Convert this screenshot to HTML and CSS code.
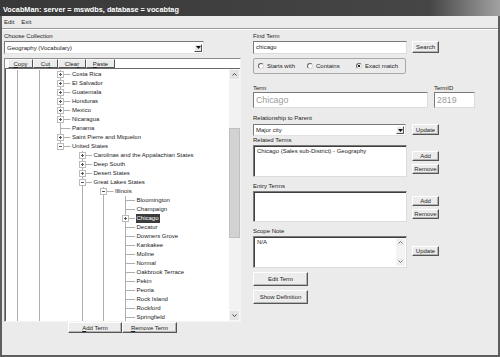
FILE: index.html
```html
<!DOCTYPE html>
<html lang="en">

<head>
    <meta charset="UTF-8">
    <meta name="viewport" content="width=device-width, initial-scale=1.0">
    <title>VocabMan</title>
    <link rel="stylesheet" href="styles.css">
</head>

<body>
    <div class="window">
        <div class="titlebar">VocabMan: server = mswdbs, database = vocabtag</div>
        <div class="frame">
            <div class="menubar"><span>Edit</span><span>Exit</span></div>

            <div class="client">
                <!-- left: collection + tree -->
                <div class="left">
                    <div class="label">Choose Collection</div>
                    <div class="select collection">
                        <span class="value">Geography (Vocabulary)</span>
                        <span class="drop"><svg width="5" height="3" viewBox="0 0 5 3"><path d="M0 0h5L2.5 3z" fill="#111"/></svg></span>
                    </div>

                    <div class="tree-frame">
                        <div class="toolbar">
                            <button class="btn tb w25"><u>C</u>opy</button>
                            <button class="btn tb w25">Cu<u>t</u></button>
                            <button class="btn tb w28">Clea<u>r</u></button>
                            <button class="btn tb w29"><u>P</u>aste</button>
                        </div>
                        <div class="tree-area">
                            <div class="tree">
                                <div class="row"><span class="c v"></span><span class="c v"></span><span class="c t"><span class="x p"></span></span><span class="txt">Costa Rica</span></div>
                                <div class="row"><span class="c v"></span><span class="c v"></span><span class="c t"><span class="x p"></span></span><span class="txt">El Salvador</span></div>
                                <div class="row"><span class="c v"></span><span class="c v"></span><span class="c t"><span class="x p"></span></span><span class="txt">Guatemala</span></div>
                                <div class="row"><span class="c v"></span><span class="c v"></span><span class="c t"><span class="x p"></span></span><span class="txt">Honduras</span></div>
                                <div class="row"><span class="c v"></span><span class="c v"></span><span class="c t"><span class="x p"></span></span><span class="txt">Mexico</span></div>
                                <div class="row"><span class="c v"></span><span class="c v"></span><span class="c t"><span class="x p"></span></span><span class="txt">Nicaragua</span></div>
                                <div class="row"><span class="c v"></span><span class="c v"></span><span class="c t"></span><span class="txt">Panama</span></div>
                                <div class="row"><span class="c v"></span><span class="c v"></span><span class="c t"><span class="x p"></span></span><span class="txt">Saint Pierre and Miquelon</span></div>
                                <div class="row"><span class="c v"></span><span class="c v"></span><span class="c l"><span class="x m"></span></span><span class="txt">United States</span></div>
                                <div class="row"><span class="c v"></span><span class="c v"></span><span class="c"></span><span class="c t"><span class="x p"></span></span><span class="txt">Carolinas and the Appalachian States</span></div>
                                <div class="row"><span class="c v"></span><span class="c v"></span><span class="c"></span><span class="c t"><span class="x p"></span></span><span class="txt">Deep South</span></div>
                                <div class="row"><span class="c v"></span><span class="c v"></span><span class="c"></span><span class="c t"><span class="x p"></span></span><span class="txt">Desert States</span></div>
                                <div class="row"><span class="c v"></span><span class="c v"></span><span class="c"></span><span class="c t"><span class="x m"></span></span><span class="txt">Great Lakes States</span></div>
                                <div class="row"><span class="c v"></span><span class="c v"></span><span class="c"></span><span class="c v"></span><span class="c t"><span class="x m"></span></span><span class="txt">Illinois</span></div>
                                <div class="row"><span class="c v"></span><span class="c v"></span><span class="c"></span><span class="c v"></span><span class="c v"></span><span class="c t"></span><span class="txt">Bloomington</span></div>
                                <div class="row"><span class="c v"></span><span class="c v"></span><span class="c"></span><span class="c v"></span><span class="c v"></span><span class="c t"></span><span class="txt">Champaign</span></div>
                                <div class="row"><span class="c v"></span><span class="c v"></span><span class="c"></span><span class="c v"></span><span class="c v"></span><span class="c t"><span class="x p"></span></span><span class="txt sel">Chicago</span></div>
                                <div class="row"><span class="c v"></span><span class="c v"></span><span class="c"></span><span class="c v"></span><span class="c v"></span><span class="c t"></span><span class="txt">Decatur</span></div>
                                <div class="row"><span class="c v"></span><span class="c v"></span><span class="c"></span><span class="c v"></span><span class="c v"></span><span class="c t"></span><span class="txt">Downers Grove</span></div>
                                <div class="row"><span class="c v"></span><span class="c v"></span><span class="c"></span><span class="c v"></span><span class="c v"></span><span class="c t"></span><span class="txt">Kankakee</span></div>
                                <div class="row"><span class="c v"></span><span class="c v"></span><span class="c"></span><span class="c v"></span><span class="c v"></span><span class="c t"></span><span class="txt">Moline</span></div>
                                <div class="row"><span class="c v"></span><span class="c v"></span><span class="c"></span><span class="c v"></span><span class="c v"></span><span class="c t"></span><span class="txt">Normal</span></div>
                                <div class="row"><span class="c v"></span><span class="c v"></span><span class="c"></span><span class="c v"></span><span class="c v"></span><span class="c t"></span><span class="txt">Oakbrook Terrace</span></div>
                                <div class="row"><span class="c v"></span><span class="c v"></span><span class="c"></span><span class="c v"></span><span class="c v"></span><span class="c t"></span><span class="txt">Pekin</span></div>
                                <div class="row"><span class="c v"></span><span class="c v"></span><span class="c"></span><span class="c v"></span><span class="c v"></span><span class="c t"></span><span class="txt">Peoria</span></div>
                                <div class="row"><span class="c v"></span><span class="c v"></span><span class="c"></span><span class="c v"></span><span class="c v"></span><span class="c t"></span><span class="txt">Rock Island</span></div>
                                <div class="row"><span class="c v"></span><span class="c v"></span><span class="c"></span><span class="c v"></span><span class="c v"></span><span class="c t"></span><span class="txt">Rockford</span></div>
                                <div class="row"><span class="c v"></span><span class="c v"></span><span class="c"></span><span class="c v"></span><span class="c v"></span><span class="c t"></span><span class="txt">Springfield</span></div>
                            </div>
                            <div class="vscroll">
                                <span class="sb-btn"><svg width="5" height="3" viewBox="0 0 5 3"><path d="M0.5 2.5L2.5 0.5L4.5 2.5" fill="none" stroke="#444"/></svg></span>
                                <div class="sb-track"><div class="sb-thumb"></div></div>
                                <span class="sb-btn"><svg width="5" height="3" viewBox="0 0 5 3"><path d="M0.5 0.5L2.5 2.5L4.5 0.5" fill="none" stroke="#444"/></svg></span>
                            </div>
                        </div>
                    </div>

                    <div class="tree-actions">
                        <button class="btn w54"><u>A</u>dd Term</button>
                        <button class="btn w55"><u>R</u>emove Term</button>
                    </div>
                </div>

                <!-- right: term details -->
                <div class="right">
                    <div class="label">Find Term</div>
                    <div class="hrow">
                        <div class="input find">chicago</div>
                        <button class="btn small">Search</button>
                    </div>

                    <div class="radios">
                        <span class="radio"><i></i>Starts with</span>
                        <span class="radio"><i></i>Contains</span>
                        <span class="radio on"><i></i>Exact match</span>
                    </div>

                    <div class="term-row">
                        <div class="field">
                            <div class="label">Term</div>
                            <div class="input big term">Chicago</div>
                        </div>
                        <div class="field">
                            <div class="label">TermID</div>
                            <div class="input big termid">2819</div>
                        </div>
                    </div>

                    <div class="label gap6">Relationship to Parent</div>
                    <div class="hrow rel">
                        <div class="select relsel">
                            <span class="value">Major city</span>
                            <span class="drop"><svg width="5" height="3" viewBox="0 0 5 3"><path d="M0 0h5L2.5 3z" fill="#111"/></svg></span>
                        </div>
                        <button class="btn small upd">Update</button>
                    </div>

                    <div class="label">Related Terms</div>
                    <div class="hrow list-row">
                        <div class="list h32">Chicago (Sales sub-District) - Geography</div>
                        <div class="side">
                            <button class="btn side-btn">Add</button>
                            <button class="btn side-btn">Remove</button>
                        </div>
                    </div>

                    <div class="label gap5">Entry Terms</div>
                    <div class="hrow list-row">
                        <div class="list h31"></div>
                        <div class="side pt5">
                            <button class="btn side-btn">Add</button>
                            <button class="btn side-btn">Remove</button>
                        </div>
                    </div>

                    <div class="label gap5">Scope Note</div>
                    <div class="hrow list-row">
                        <div class="list h32 note">
                            <span class="note-text">N/A</span>
                            <span class="mini-scroll">
                                <span class="sb-btn"><svg width="5" height="3" viewBox="0 0 5 3"><path d="M0.5 2.5L2.5 0.5L4.5 2.5" fill="none" stroke="#777"/></svg></span>
                                <span class="sb-btn"><svg width="5" height="3" viewBox="0 0 5 3"><path d="M0.5 0.5L2.5 2.5L4.5 0.5" fill="none" stroke="#777"/></svg></span>
                            </span>
                        </div>
                        <div class="side pt10">
                            <button class="btn side-btn">Update</button>
                        </div>
                    </div>

                    <button class="btn wide">Edit Term</button>
                    <button class="btn wide">Show Definition</button>
                </div>
            </div>
        </div>
    </div>
</body>

</html>
```

FILE: styles.css
```css
* {
    box-sizing: border-box;
}

body {
    margin: 0;
    font-family: "Liberation Sans", Arial, sans-serif;
    font-size: 6px;
    color: #1c1c1c;
    background-color: #ebebeb;
}

.window {
    width: 500px;
    height: 357px;
    display: flex;
    flex-direction: column;
    overflow: hidden;
}

.titlebar {
    height: 16px;
    padding: 6px 0 0 3px;
    line-height: 8px;
    font-size: 7.3px;
    font-weight: bold;
    color: #fff;
    white-space: nowrap;
    background: linear-gradient(to right, #383838, #464646 86%, #a2a2a2);
}

.frame {
    flex: 1;
    background-color: #ebebeb;
    border: solid #5e5e5e;
    border-width: 0 2px 2px 2px;
}

.menubar {
    height: 13px;
    display: flex;
    gap: 7px;
    padding-left: 2px;
    line-height: 12px;
    border-bottom: 1px solid #9a9a9a;
    box-shadow: 0 1px #fff;
}

.client {
    display: flex;
    gap: 12px;
    padding: 3px 0 0 2px;
}

.label {
    height: 8px;
    line-height: 8px;
    color: #222;
    white-space: nowrap;
}

.btn {
    font: inherit;
    color: #1c1c1c;
    padding: 0;
    line-height: 1;
    white-space: nowrap;
    background-color: #ececec;
    border: 1px solid;
    border-color: #fff #555 #555 #fff;
    box-shadow: inset -1px -1px #b4b4b4;
    cursor: default;
}

/* left column */
.left {
    width: 237px;
    display: flex;
    flex-direction: column;
}

.select {
    display: flex;
    align-items: center;
    background-color: #fff;
    border: 1px solid;
    border-color: #7a7a7a #e2e2e2 #e2e2e2 #7a7a7a;
    padding: 0 1px 0 2px;
}

.select .value {
    flex: 1;
}

.collection {
    margin-top: 1px;
    width: 200px;
    height: 13px;
}

.drop {
    width: 8px;
    height: 8px;
    display: flex;
    align-items: center;
    justify-content: center;
    background-color: #e8e8e8;
    border: 1px solid;
    border-color: #fff #555 #555 #fff;
}

.tree-frame {
    margin-top: 4px;
    height: 264px;
    display: flex;
    flex-direction: column;
    background-color: #fff;
    border: 1px solid;
    border-color: #8a8a8a #f4f4f4 #f4f4f4 #8a8a8a;
}

.toolbar {
    flex: none;
    height: 10px;
    display: flex;
    padding-left: 3px;
    border-bottom: 1px solid #6a6a6a;
}

.tb {
    height: 9px;
    border-top-color: #f8f8f8;
    box-shadow: none;
}

.w25 { width: 25px; }
.w28 { width: 28px; }
.w29 { width: 29px; }
.w54 { width: 54px; }
.w55 { width: 55px; }

.tree-area {
    flex: 1;
    display: flex;
    min-height: 0;
}

.tree {
    flex: 1;
    overflow: hidden;
    padding: 1px 0 0 1px;
    box-shadow: inset 1px 0 #555;
}

.row {
    height: 9px;
    display: flex;
    white-space: nowrap;
}

.c {
    flex: none;
    width: 21.5px;
    height: 9px;
}

.v {
    background: linear-gradient(#b0b0b0, #b0b0b0) 11px 0 / 1px 100% no-repeat;
}

.t {
    background:
        linear-gradient(#b0b0b0, #b0b0b0) 11px 0 / 1px 100% no-repeat,
        linear-gradient(#b0b0b0, #b0b0b0) 11px 4px / 10.5px 1px no-repeat;
}

.l {
    background:
        linear-gradient(#b0b0b0, #b0b0b0) 11px 0 / 1px 5px no-repeat,
        linear-gradient(#b0b0b0, #b0b0b0) 11px 4px / 10.5px 1px no-repeat;
}

.x {
    display: block;
    width: 7px;
    height: 7px;
    margin: 1px 0 0 8px;
    border: 1px solid #bcbcbc;
}

.x.p {
    background:
        linear-gradient(#555, #555) center / 3px 1px no-repeat,
        linear-gradient(#555, #555) center / 1px 3px no-repeat,
        #fff;
}

.x.m {
    background:
        linear-gradient(#555, #555) center / 3px 1px no-repeat,
        #fff;
}

.txt {
    line-height: 9px;
    padding: 0 1px;
    margin-left: 0.5px;
}

.txt.sel {
    background-color: #3c3c3c;
    color: #fff;
}

.vscroll {
    flex: none;
    width: 11px;
    display: flex;
    flex-direction: column;
    background-color: #f2f2f2;
}

.sb-btn {
    flex: none;
    height: 11px;
    display: flex;
    align-items: center;
    justify-content: center;
    background-color: #e4e4e4;
    border: 1px solid #f6f6f6;
}

.sb-track {
    flex: 1;
    padding-top: 48px;
}

.sb-thumb {
    height: 110px;
    background-color: #d2d2d2;
    border: 1px solid #c0c0c0;
}

.tree-actions {
    height: 11px;
    display: flex;
    justify-content: center;
}

.tree-actions .btn {
    height: 11px;
}

/* right column */
.right {
    width: 225px;
    display: flex;
    flex-direction: column;
}

.hrow {
    margin-top: 1px;
    display: flex;
    align-items: flex-start;
}

.input {
    background-color: #fff;
    border: 1px solid;
    border-color: #7a7a7a #dcdcdc #dcdcdc #7a7a7a;
    padding-left: 2px;
    white-space: nowrap;
}

.find {
    width: 154px;
    height: 13px;
    line-height: 11px;
}

.small {
    margin-left: 5px;
    width: 27px;
    height: 12px;
}

.radios {
    margin-top: 4px;
    width: 153px;
    height: 16px;
    display: flex;
    align-items: center;
    padding-left: 4px;
    border: 1px solid #a8a8a8;
    border-radius: 2px;
}

.radio {
    width: 49px;
    display: flex;
    align-items: center;
    gap: 3px;
    white-space: nowrap;
}

.radio i {
    width: 6px;
    height: 6px;
    border-radius: 50%;
    border: 1px solid;
    border-color: #666 #d6d6d6 #d6d6d6 #666;
    background-color: #fff;
}

.radio.on i {
    background: radial-gradient(circle, #222 1.1px, #fff 1.5px);
}

.term-row {
    margin-top: 10px;
    display: flex;
    gap: 6px;
}

.big {
    height: 16px;
    line-height: 14px;
    font-size: 8.8px;
    color: #9c9c9c;
}

.term {
    width: 175px;
}

.termid {
    width: 41px;
}

.gap6 {
    margin-top: 6px;
}

.gap5 {
    margin-top: 5px;
}

.rel {
    margin-top: 2px;
}

.relsel {
    width: 153px;
    height: 12px;
}

.relsel .drop {
    height: 8px;
}

.upd {
    margin-left: 6px;
    height: 11px;
}

.list-row {
    margin-top: 1px;
}

.list {
    width: 154px;
    background-color: #fff;
    border: 1px solid;
    border-color: #7a7a7a #dcdcdc #dcdcdc #7a7a7a;
    box-shadow: inset 1px 1px #3e3e3e;
    padding: 2px 0 0 3px;
    white-space: nowrap;
}

.h32 { height: 32px; }
.h31 { height: 31px; }

.note {
    display: flex;
    padding: 0 1px 1px 3px;
}

.note-text {
    flex: 1;
    padding-top: 2px;
}

.mini-scroll {
    width: 9px;
    display: flex;
    flex-direction: column;
    justify-content: space-between;
    background-color: #f4f4f4;
    margin-top: 1px;
}

.mini-scroll .sb-btn {
    height: 9px;
    background-color: #eeeeee;
}

.side {
    margin-left: 5px;
    padding-top: 6px;
    display: flex;
    flex-direction: column;
    gap: 3px;
}

.side.pt5 {
    padding-top: 5px;
}

.side.pt10 {
    padding-top: 10px;
}

.side-btn {
    width: 27px;
    height: 10px;
}

.wide {
    margin-top: 4px;
    width: 55px;
    height: 14px;
}
```
